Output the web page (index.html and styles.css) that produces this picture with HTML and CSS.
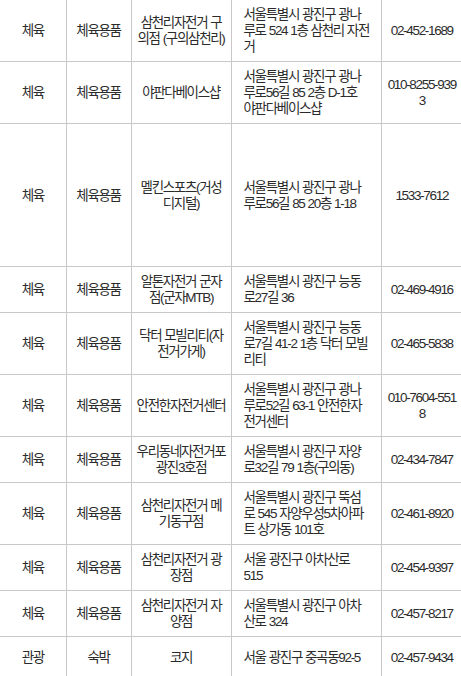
FILE: index.html
```html
<!DOCTYPE html>
<html lang="ko">
<head>
<meta charset="utf-8">
<title>자전거 매장 목록</title>
<link rel="stylesheet" href="styles.css">
</head>
<body>
<table class="list">
  <colgroup>
    <col class="c-cat">
    <col class="c-sub">
    <col class="c-name">
    <col class="c-addr">
    <col class="c-tel">
  </colgroup>
  <tbody>
    <tr>
      <td>체육</td><td>체육용품</td><td class="name">삼천리자전거 구의점 (구의삼천리)</td>
      <td class="addr">서울특별시 광진구 광나루로 524 1층 삼천리 자전거</td><td class="tel">02-452-1689</td>
    </tr>
    <tr>
      <td>체육</td><td>체육용품</td><td class="name">야판다베이스샵</td>
      <td class="addr">서울특별시 광진구 광나루로56길 85 2층 D-1호 야판다베이스샵</td><td class="tel">010-8255-9393</td>
    </tr>
    <tr class="tall">
      <td>체육</td><td>체육용품</td><td class="name">멜킨스포츠(거성디지털)</td>
      <td class="addr">서울특별시 광진구 광나루로56길 85 20층 1-18</td><td class="tel">1533-7612</td>
    </tr>
    <tr>
      <td>체육</td><td>체육용품</td><td class="name">알톤자전거 군자점(군자MTB)</td>
      <td class="addr">서울특별시 광진구 능동로27길 36</td><td class="tel">02-469-4916</td>
    </tr>
    <tr>
      <td>체육</td><td>체육용품</td><td class="name">닥터 모빌리티(자전거가게)</td>
      <td class="addr">서울특별시 광진구 능동로7길 41-2 1층 닥터 모빌리티</td><td class="tel">02-465-5838</td>
    </tr>
    <tr>
      <td>체육</td><td>체육용품</td><td class="name">안전한자전거센터</td>
      <td class="addr">서울특별시 광진구 광나루로52길 63-1 안전한자전거센터</td><td class="tel">010-7604-5518</td>
    </tr>
    <tr>
      <td>체육</td><td>체육용품</td><td class="name">우리동네자전거포 광진3호점</td>
      <td class="addr">서울특별시 광진구 자양로32길 79 1층(구의동)</td><td class="tel">02-434-7847</td>
    </tr>
    <tr>
      <td>체육</td><td>체육용품</td><td class="name">삼천리자전거 메기동구점</td>
      <td class="addr">서울특별시 광진구 뚝섬로 545 자양우성5차아파트 상가동 101호</td><td class="tel">02-461-8920</td>
    </tr>
    <tr>
      <td>체육</td><td>체육용품</td><td class="name">삼천리자전거 광장점</td>
      <td class="addr">서울 광진구 아차산로 515</td><td class="tel">02-454-9397</td>
    </tr>
    <tr>
      <td>체육</td><td>체육용품</td><td class="name">삼천리자전거 자양점</td>
      <td class="addr">서울특별시 광진구 아차산로 324</td><td class="tel">02-457-8217</td>
    </tr>
    <tr class="last">
      <td>관광</td><td>숙박</td><td class="name">코지</td>
      <td class="addr">서울 광진구 중곡동92-5</td><td class="tel">02-457-9434</td>
    </tr>
  </tbody>
</table>
</body>
</html>
```

FILE: styles.css
```css
html, body {
  margin: 0;
  padding: 0;
  background: #ffffff;
}

.list {
  width: 462px;
  table-layout: fixed;
  border-collapse: collapse;
  border-style: hidden;
  font-family: "Liberation Sans", "Noto Sans CJK KR", sans-serif;
  font-size: 13.5px;
  letter-spacing: -1.32px;
  word-spacing: 0.57px;
  line-height: 16px;
  color: #2b2b2b;
}

.c-cat { width: 66px; }
.c-sub { width: 65px; }
.c-name { width: 100px; }
.c-addr { width: 150px; }
.c-tel { width: 81px; }

.list td {
  border: 1px solid #c8c8c8;
  padding: 7px 4.4px 6px;
  text-align: center;
  vertical-align: middle;
  word-break: normal;
}

.list td.addr {
  text-align: left;
  padding-left: 12px;
  padding-right: 10.7px;
}

.list td.tel {
  padding-left: 5px;
  padding-right: 5px;
  word-break: break-all;
}

.list tr.tall td {
  height: 129px;
}

.list tr.last td {
  height: 27px;
}
```
